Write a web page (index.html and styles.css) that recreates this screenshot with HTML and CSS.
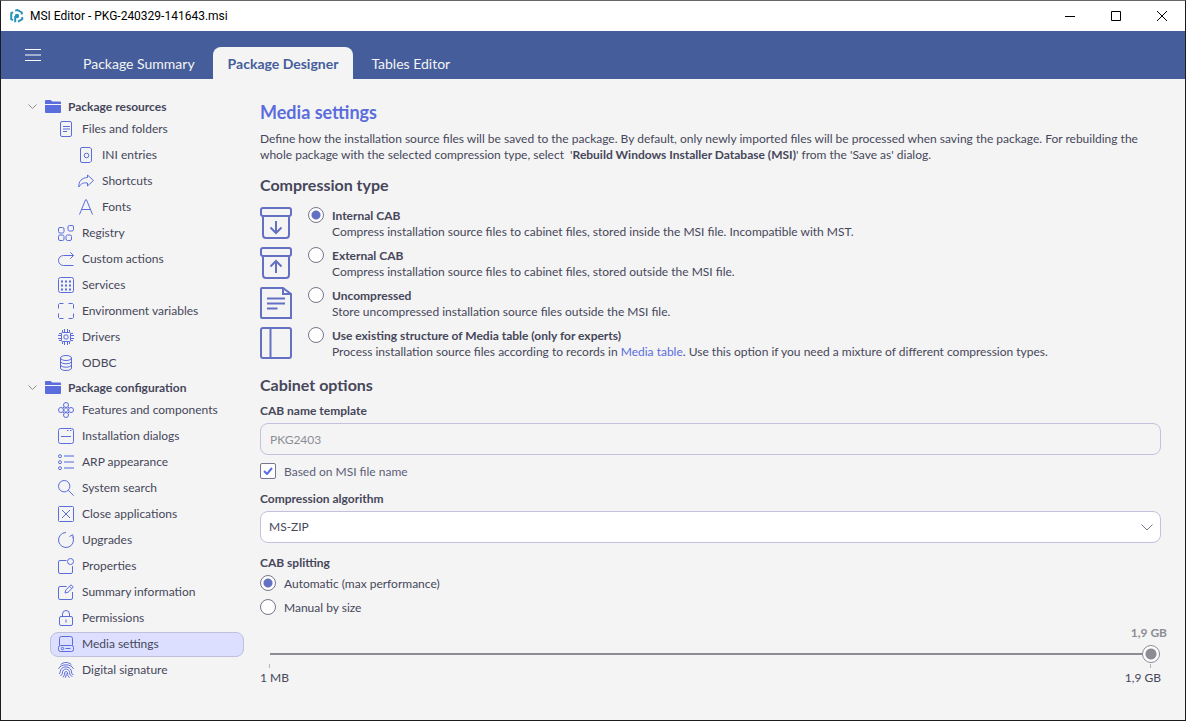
FILE: index.html
```html
<!DOCTYPE html>
<html lang="en">
<head>
  <meta charset="UTF-8" />
  <meta name="viewport" content="width=device-width, initial-scale=1.0" />
  <title>MSI Editor - PKG-240329-141643.msi</title>
  <link rel="stylesheet" href="styles.css">
</head>
<body>
  <div class="titlebar">
    <svg class="app-logo" viewBox="0 0 14 14">
      <path d="M5.2 1.6L7.4 1 11.800 3.500V5.600M12.200 8v2.200L8 12.600M5.200 13.200V7M3 11.200L1.200 10.200V4.400L3 3.200" />
      <circle cx="7" cy="7" r="2.200" />
    </svg>
    <span class="window-title">MSI Editor - PKG-240329-141643.msi</span>
    <div class="window-buttons">
      <button aria-label="Minimize"><svg viewBox="0 0 10 10"><path d="M0 5.500h10" /></svg></button>
      <button aria-label="Maximize"><svg viewBox="0 0 10 10"><path d="M.5 .5h9v9h-9z" /></svg></button>
      <button aria-label="Close"><svg viewBox="0 0 10 10"><path d="M0 0l10 10M10 0L0 10" /></svg></button>
    </div>
  </div>

  <header class="topbar">
    <button class="menu-button" aria-label="Menu">
      <svg viewBox="0 0 16 12"><path d="M0 .5h16M0 6h16M0 11.500h16" /></svg>
    </button>
    <nav class="tabs">
      <a href="#summary">Package Summary</a>
      <a href="#designer" class="active">Package Designer</a>
      <a href="#tables">Tables Editor</a>
    </nav>
  </header>

  <div class="layout">
    <nav class="sidebar">
      <button class="group">
        <svg class="chevron" viewBox="0 0 9 6"><path d="M.5 .5l4 4 4-4" /></svg>
        <svg class="folder" viewBox="0 0 16 13"><path d="M0 4V1a1 1 0 0 1 1-1h4.500l2 1.500H15a1 1 0 0 1 1 1V4z" /><path d="M0 5h16v7a1 1 0 0 1-1 1H1a1 1 0 0 1-1-1z" /></svg>
        Package resources
      </button>
      <ul>
        <li><a href="#files">
          <svg class="icon" viewBox="0 0 16 16"><rect x="2.500" y=".5" width="11" height="15" rx="1.500" /><path d="M5 5.500h7M5 8h7M5 10.500h4" /></svg>
          Files and folders</a>
          <ul class="nested">
            <li><a href="#ini">
              <svg class="icon" viewBox="0 0 16 16"><path d="M4 .5h8l1.500 1.500v12L12 15.500H4a1.500 1.500 0 0 1-1.500-1.500V2A1.500 1.500 0 0 1 4 .5z" /><circle cx="8.500" cy="8.500" r="2.300" /></svg>
              INI entries</a></li>
            <li><a href="#shortcuts">
              <svg class="icon" viewBox="0 0 16 16"><path d="M9.500 4.500V2L15.500 7.500l-6 5.500v-3C5 9.500 3 10.500 .8 14 .5 8.500 3.500 4.800 9.500 4.500z" /></svg>
              Shortcuts</a></li>
            <li><a href="#fonts">
              <svg class="icon" viewBox="0 0 16 16"><path d="M1.500 15.500L7.500 .8h1l6 14.700M4 10.500h8" /></svg>
              Fonts</a></li>
          </ul>
        </li>
        <li><a href="#registry">
          <svg class="icon" viewBox="0 0 16 16"><rect x=".5" y="2.500" width="5.500" height="5.500" rx="1.500" /><rect x="10" y=".5" width="5.500" height="5.500" rx="1.500" /><rect x=".5" y="10" width="5.500" height="5.500" rx="1.500" /><rect x="8" y="10" width="5.500" height="5.500" rx="1.500" /></svg>
          Registry</a></li>
        <li><a href="#actions">
          <svg class="icon" viewBox="0 0 16 16"><path d="M15.500 14.500H5.500a5 5 0 0 1 0-10h10M12.300 1.300l3.200 3.200-3.200 3.200" /></svg>
          Custom actions</a></li>
        <li><a href="#services">
          <svg class="icon" viewBox="0 0 16 16"><rect x=".5" y=".5" width="15" height="15" rx="2" /><path class="dots" d="M3 4.500h10M3 8.500h10M3 12.500h10" /></svg>
          Services</a></li>
        <li><a href="#env">
          <svg class="icon" viewBox="0 0 16 16"><path d="M.5 5.500v-4l1-1h4M10.500 .5h4l1 1v4M15.500 10.500v4l-1 1h-4M5.500 15.500h-4l-1-1v-4" /></svg>
          Environment variables</a></li>
        <li><a href="#drivers">
          <svg class="icon" viewBox="0 0 16 16"><rect x="3.500" y="3.500" width="9" height="9" rx="1" /><rect x="6" y="6" width="4" height="4" rx="1" /><path d="M4.500 3V1M6.500 3V0M9.500 3V0M11.500 3V1M4.500 13v2M6.500 13v3M9.500 13v3M11.500 13v2M3 4.500H1M3 6.500H0M3 9.500H0M3 11.500H1M13 4.500h2M13 6.500h3M13 9.500h3M13 11.500h2" /></svg>
          Drivers</a></li>
        <li><a href="#odbc">
          <svg class="icon" viewBox="0 0 16 16"><ellipse cx="8" cy="3" rx="5.500" ry="2.500" /><path d="M2.500 3v10c0 3.300 11 3.300 11 0V3M2.500 6.300c0 3.300 11 3.300 11 0M2.500 9.700c0 3.300 11 3.300 11 0" /></svg>
          ODBC</a></li>
      </ul>

      <button class="group">
        <svg class="chevron" viewBox="0 0 9 6"><path d="M.5 .5l4 4 4-4" /></svg>
        <svg class="folder" viewBox="0 0 16 13"><path d="M0 4V1a1 1 0 0 1 1-1h4.500l2 1.500H15a1 1 0 0 1 1 1V4z" /><path d="M0 5h16v7a1 1 0 0 1-1 1H1a1 1 0 0 1-1-1z" /></svg>
        Package configuration
      </button>
      <ul>
        <li><a href="#features">
          <svg class="icon" viewBox="0 0 16 16"><circle cx="8" cy="3" r="2.500" /><circle cx="3" cy="8" r="2.500" /><circle cx="13" cy="8" r="2.500" /><circle cx="8" cy="13" r="2.500" /><path d="M8 5.500L10.500 8 8 10.500 5.500 8zM5 6l1-1M10 5l1 1M5 10l1 1M10 11l1-1" /></svg>
          Features and components</a></li>
        <li><a href="#dialogs">
          <svg class="icon" viewBox="0 0 16 16"><rect x=".5" y=".5" width="15" height="15" rx="2" /><path d="M3 8.500h10M9 2.500h1.500M12 2.500h1.500" /></svg>
          Installation dialogs</a></li>
        <li><a href="#arp">
          <svg class="icon" viewBox="0 0 16 16"><circle cx="2" cy="2.200" r="1.500" /><circle cx="2" cy="8.200" r="1.500" /><circle cx="2" cy="14.200" r="1.500" /><path class="pale" d="M6 2h10M6 8h10M6 14h10" /></svg>
          ARP appearance</a></li>
        <li><a href="#search">
          <svg class="icon" viewBox="0 0 16 16"><circle cx="6.200" cy="6.200" r="5.700" /><path d="M10.300 10.300l5.400 5.400" /></svg>
          System search</a></li>
        <li><a href="#close">
          <svg class="icon" viewBox="0 0 16 16"><rect x=".5" y=".5" width="15" height="15" rx="1" /><path d="M4 4l8 8M12 4l-8 8" /></svg>
          Close applications</a></li>
        <li><a href="#upgrades">
          <svg class="icon" viewBox="0 0 16 16"><path d="M8 .5a7.500 7.500 0 1 0 6.800 4.300M11.500 4.500l3.200-1.800.8 3.600" /></svg>
          Upgrades</a></li>
        <li><a href="#properties">
          <svg class="icon" viewBox="0 0 16 16"><circle cx="12.500" cy="3.500" r="3" /><path d="M8.500 2.500H2a1.500 1.500 0 0 0-1.500 1.500v10A1.500 1.500 0 0 0 2 15.500h11a1.500 1.500 0 0 0 1.500-1.500V8" /></svg>
          Properties</a></li>
        <li><a href="#information">
          <svg class="icon" viewBox="0 0 16 16"><path d="M8.500 2.500H2A1.500 1.500 0 0 0 .5 4v10A1.500 1.500 0 0 0 2 15.500h11a1.500 1.500 0 0 0 1.500-1.500V8M7 9l.8-3L13 .8l2.300 2.300L10 8.300zM11.500 2.300l2.300 2.300" /></svg>
          Summary information</a></li>
        <li><a href="#permissions">
          <svg class="icon" viewBox="0 0 16 16"><rect x="1.500" y="6.500" width="13" height="9" rx="1.500" /><path d="M4.500 6.500V4a3.500 3.500 0 0 1 7 0v2.500M8 9.500v3" /></svg>
          Permissions</a></li>
        <li><a href="#media" class="selected">
          <svg class="icon" viewBox="0 0 16 16"><path d="M1.500 9.500v-7a2 2 0 0 1 2-2h9a2 2 0 0 1 2 2v7" /><rect x=".5" y="9.500" width="15" height="6" rx="2" /><circle cx="4.500" cy="12.500" r="1.200" /><path d="M7.500 12.500h5" /></svg>
          Media settings</a></li>
        <li><a href="#signature">
          <svg class="icon" viewBox="0 0 16 16"><path d="M2.500 2.800C5.500-.3 10.500-.3 13.500 2.800M.5 6.800C3 1.500 13 1.500 15.500 6.800M1 12C2.800 10.800 1.800 8 4 6.300c3.500-3 9.300-1 9.500 3.700 0 2 .8 2.500 2 2.500M2.500 14C5 12.300 4 9.500 5.500 8c2-2 6-.6 6 2.400 0 2.300 1.200 3.600 3 4M5 15.300C7 13.500 6 11 7.200 9.800c1-.8 2.300 0 2.300 1.200 0 2.200.7 3.500 2 4.800M8.200 11.500c0 1.700-.2 3-.9 4.300" /></svg>
          Digital signature</a></li>
      </ul>
    </nav>

    <main>
      <h1>Media settings</h1>
      <p class="intro">Define how the installation source files will be saved to the package. By default, only newly imported files will be processed when saving the package. For rebuilding the whole package with the selected compression type, select &nbsp;'<b>Rebuild Windows Installer Database (MSI)</b>' from the 'Save as' dialog.</p>

      <h2>Compression type</h2>
      <div class="option">
        <svg class="option-icon" viewBox="0 0 32 32"><rect x="1" y="1" width="30" height="8" rx="2" /><path d="M3 9v19a3 3 0 0 0 3 3h20a3 3 0 0 0 3-3V9M16 14v12M10.500 20.500L16 26l5.500-5.500" /></svg>
        <input type="radio" name="compression" id="internal" checked>
        <div>
          <label for="internal">Internal CAB</label>
          <p>Compress installation source files to cabinet files, stored inside the MSI file. Incompatible with MST.</p>
        </div>
      </div>
      <div class="option">
        <svg class="option-icon" viewBox="0 0 32 32"><rect x="1" y="1" width="30" height="8" rx="2" /><path d="M3 9v19a3 3 0 0 0 3 3h20a3 3 0 0 0 3-3V9M16 26V14M10.500 19.500L16 14l5.500 5.500" /></svg>
        <input type="radio" name="compression" id="external">
        <div>
          <label for="external">External CAB</label>
          <p>Compress installation source files to cabinet files, stored outside the MSI file.</p>
        </div>
      </div>
      <div class="option">
        <svg class="option-icon" viewBox="0 0 32 32"><path d="M2 1h21l8 6v24H2a1 1 0 0 1-1-1V2a1 1 0 0 1 1-1zM23 1v6h8M7 11.500h18M7 16.500h18M7 21.500h10.500" /></svg>
        <input type="radio" name="compression" id="uncompressed">
        <div>
          <label for="uncompressed">Uncompressed</label>
          <p>Store uncompressed installation source files outside the MSI file.</p>
        </div>
      </div>
      <div class="option">
        <svg class="option-icon" viewBox="0 0 32 32"><rect x="1" y="1" width="30" height="30" rx="2" /><path d="M10.500 1v30" /></svg>
        <input type="radio" name="compression" id="existing">
        <div>
          <label for="existing">Use existing structure of Media table (only for experts)</label>
          <p>Process installation source files according to records in <a href="#media-table">Media table</a>. Use this option if you need a mixture of different compression types.</p>
        </div>
      </div>

      <h2>Cabinet options</h2>
      <label class="caption" for="template">CAB name template</label>
      <input type="text" id="template" value="PKG2403" disabled>
      <div class="check">
        <input type="checkbox" id="based" checked>
        <svg viewBox="0 0 10 8"><path d="M1 4l3 3 5-6" /></svg>
        <label for="based">Based on MSI file name</label>
      </div>

      <label class="caption" for="algorithm">Compression algorithm</label>
      <div class="select">
        <select id="algorithm">
          <option>MS-ZIP</option>
          <option>LZX</option>
        </select>
        <svg viewBox="0 0 12 7"><path d="M.5 .5L6 6l5.500-5.500" /></svg>
      </div>

      <div class="caption" id="splitting">CAB splitting</div>
      <div role="radiogroup" aria-labelledby="splitting">
        <div class="radio">
          <input type="radio" name="splitting" id="automatic" checked>
          <label for="automatic">Automatic (max performance)</label>
        </div>
        <div class="radio">
          <input type="radio" name="splitting" id="manual">
          <label for="manual">Manual by size</label>
        </div>
      </div>

      <div class="slider">
        <output for="size">1,9 GB</output>
        <input type="range" id="size" min="1" max="1900" value="1900" aria-labelledby="splitting" disabled>
        <div class="ticks"><i></i><i></i></div>
        <div class="limits"><span>1 MB</span><span>1,9 GB</span></div>
      </div>
    </main>
  </div>
</body>
</html>
```

FILE: styles.css
```css
* {
  box-sizing: border-box;
}
body {
  margin: 0;
  min-height: 100vh;
  border: 1px solid #1c1c20;
  border-top-color: #666;
  background: #f4f4f4;
  font-family: Lato, Roboto, sans-serif;
  font-size: 12px;
  line-height: 16px;
  color: #46475a;
}
button, input, select {
  font: inherit;
  color: inherit;
}
button {
  border: none;
  background: none;
  padding: 0;
}
a {
  color: inherit;
  text-decoration: none;
}
svg {
  display: block;
  flex: none;
  fill: none;
}
h1, h2, p, ul {
  margin: 0;
  padding: 0;
}
ul {
  list-style: none;
}

/* window title */
.titlebar {
  display: flex;
  align-items: center;
  height: 30px;
  padding-left: 9px;
  background: #fff;
  font-family: Roboto, sans-serif;
  color: #000;
}
.app-logo {
  width: 14px;
  height: 14px;
  margin-right: 6px;
  stroke: #2b93b8;
  stroke-width: 2;
}
.app-logo circle {
  fill: #2b93b8;
  stroke: none;
}
.window-title {
  flex: 1;
}
.window-buttons {
  display: flex;
}
.window-buttons button {
  width: 46px;
  height: 30px;
}
.window-buttons svg {
  width: 10px;
  height: 10px;
  margin: 0 auto;
  stroke: #000;
}

/* blue bar with tabs */
.topbar {
  display: flex;
  height: 48px;
  background: #455e9b;
}
.menu-button {
  width: 64px;
}
.menu-button svg {
  width: 16px;
  height: 12px;
  margin: 0 auto;
  stroke: #fff;
}
.tabs {
  display: flex;
  align-items: flex-end;
  gap: 3px;
  padding-left: 3px;
}
.tabs a {
  padding: 8px 15px 6px;
  border-radius: 8px 8px 0 0;
  font-size: 14px;
  line-height: 18px;
  color: #f4f4f4;
}
.tabs .active {
  background: #f4f4f4;
  color: #455e9b;
  font-weight: 700;
}

.layout {
  display: flex;
}

/* tree */
.sidebar {
  flex: none;
  width: 243px;
  padding-top: 16px;
}
.group {
  display: flex;
  align-items: center;
  height: 21px;
  padding: 2px 0 0 27px;
  font-weight: 700;
}
.chevron {
  width: 9px;
  height: 6px;
  margin-right: 8px;
  stroke: #8c8c94;
}
.folder {
  width: 16px;
  height: 13px;
  margin-right: 7px;
  fill: #5b6ddd;
}
.sidebar li a {
  display: flex;
  align-items: center;
  gap: 8px;
  height: 25px;
  margin: 1px 0 0 49px;
  padding: 0 0 1px 7px;
  border: 1px solid transparent;
  border-radius: 8px;
}
.sidebar .nested a {
  padding-left: 27px;
}
.sidebar li .selected {
  background: #dcdfff;
  border-color: #bfc0dc;
}
.icon {
  width: 16px;
  height: 16px;
  stroke: #5b6ddd;
}
.icon .dots {
  stroke-width: 2;
  stroke-dasharray: 2 2;
}
.icon .pale {
  stroke: #a3ade8;
  stroke-width: 2;
}

/* page */
main {
  flex: 1;
  padding: 21px 24px 24px 16px;
}
h1 {
  font-size: 18px;
  line-height: 24px;
  font-weight: 700;
  color: #5b6ddd;
}
h2 {
  margin-bottom: 10px;
  font-size: 16px;
  line-height: 24px;
  font-weight: 700;
}
.intro {
  margin: 7px 0 10px;
}
b {
  font-weight: 700;
}
.option {
  display: flex;
  height: 40px;
}
.option-icon {
  width: 32px;
  height: 32px;
  margin-right: 16px;
  stroke: #6470c2;
  stroke-width: 2;
}
.option label {
  display: block;
  font-weight: 700;
}
.option a {
  color: #5b6ddd;
}
.option + h2 {
  margin: 6px 0;
}
.caption {
  display: block;
  margin-bottom: 4px;
  font-weight: 700;
}
input[type="radio"], input[type="checkbox"] {
  appearance: none;
  flex: none;
  width: 16px;
  height: 16px;
  margin: 0 8px 0 0;
  border: 1px solid #77768f;
  background: #fff;
}
input[type="radio"] {
  border-radius: 50%;
}
input[type="radio"]:checked {
  background: radial-gradient(circle, #6470c2 4px, #fff 5px);
}
input[type="checkbox"] {
  border-radius: 2px;
}
input[type="radio"] + *, .check label {
  padding-top: 1px;
}
input[type="text"], select {
  display: block;
  width: 100%;
  height: 32px;
  padding: 0 9px;
  border: 1px solid #c3c2de;
  border-radius: 8px;
}
input[type="text"] {
  background: none;
  color: #8c8c94;
}
select {
  appearance: none;
  padding: 0 8px;
  background: #fff;
}
.check {
  position: relative;
  display: flex;
  height: 16px;
  margin: 8px 0 12px;
}
.check svg {
  position: absolute;
  left: 3px;
  top: 4px;
  width: 10px;
  height: 8px;
  stroke: #5b6ddd;
  stroke-width: 2;
  pointer-events: none;
}
.check label {
  color: #5d5e78;
}
.select {
  position: relative;
  margin-bottom: 12px;
}
.select svg {
  position: absolute;
  right: 8px;
  top: 13px;
  width: 12px;
  height: 7px;
  stroke: #77768f;
  pointer-events: none;
}
.radio {
  display: flex;
  height: 16px;
  margin-bottom: 8px;
}
.slider {
  margin-top: 10px;
}
.slider output {
  display: block;
  margin-right: -6px;
  text-align: right;
  font-weight: 700;
  color: #8c8c94;
}
.slider input {
  appearance: none;
  display: block;
  width: calc(100% - 11px);
  height: 18px;
  margin: 4px 0 0 10px;
  background: none;
}
.slider input::-webkit-slider-runnable-track {
  height: 2px;
  background: #8c8c94;
}
.slider input::-webkit-slider-thumb {
  appearance: none;
  width: 18px;
  height: 18px;
  margin-top: -8px;
  border: 1px solid #8c8c94;
  border-radius: 50%;
  background: radial-gradient(circle, #8c8c94 5px, #fff 6px);
}
.ticks {
  display: flex;
  justify-content: space-between;
  padding: 1px 10px 2px 9px;
}
.ticks i {
  width: 1px;
  height: 4px;
  background: #b4b4ba;
}
.limits {
  display: flex;
  justify-content: space-between;
}
```
